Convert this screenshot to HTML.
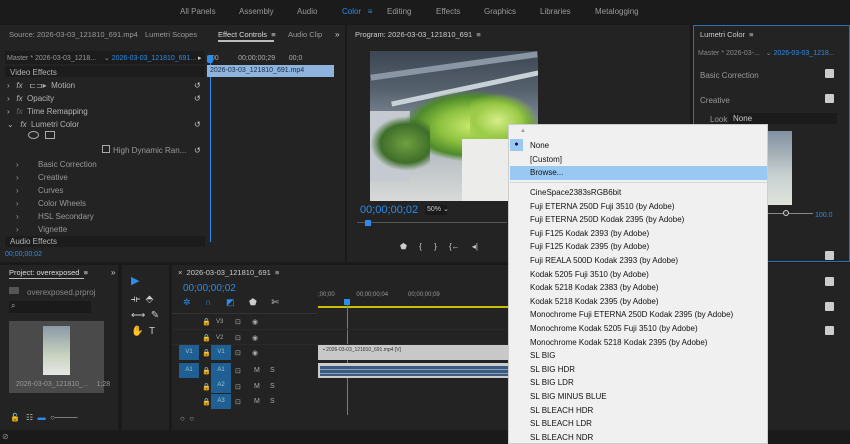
<!DOCTYPE html><html><head><style>
*{margin:0;padding:0;box-sizing:border-box}
body{width:850px;height:443px;background:#1a1a1a;font-family:"Liberation Sans",sans-serif;font-size:8px;color:#b4b4b4;position:relative;overflow:hidden}
.a{position:absolute;white-space:nowrap}
.p{position:absolute;background:#232323}
.b{color:#2d8ceb}
.menu{position:absolute;left:508px;top:124px;width:260px;height:320px;background:#f0f0f0;border:1px solid #ccc;color:#111;font-size:8px}
.mi{position:absolute;left:21px;white-space:nowrap}
.cb{position:absolute;width:9px;height:9px;background:#ccc;border-radius:1px}
.tb{position:absolute;width:20px;height:15px;background:#1f5f94;color:#9cc;font-size:6px;text-align:center;line-height:15px}
.t{position:absolute;color:#aaa;font-size:7px;white-space:nowrap}
</style></head><body>
<!-- top bar -->
<div class="a" style="left:0;top:0;width:850px;height:22px;background:#1b1b1b"></div>
<div class="a" style="left:180px;top:7px;color:#999">All Panels</div>
<div class="a" style="left:239px;top:7px;color:#999">Assembly</div>
<div class="a" style="left:297px;top:7px;color:#999">Audio</div>
<div class="a b" style="left:342px;top:7px">Color &nbsp;&nbsp;≡</div>
<div class="a" style="left:387px;top:7px;color:#999">Editing</div>
<div class="a" style="left:436px;top:7px;color:#999">Effects</div>
<div class="a" style="left:484px;top:7px;color:#999">Graphics</div>
<div class="a" style="left:540px;top:7px;color:#999">Libraries</div>
<div class="a" style="left:595px;top:7px;color:#999">Metalogging</div>
<!-- source / effect controls panel -->
<div class="p" style="left:0;top:25px;width:345px;height:237px"></div>
<div class="a" style="left:9px;top:30px;color:#999;font-size:7.5px">Source: 2026-03-03_121810_691.mp4</div>
<div class="a" style="left:145px;top:30px;color:#999;font-size:7.5px">Lumetri Scopes</div>
<div class="a" style="left:218px;top:30px;color:#ddd;font-size:7.5px">Effect Controls &nbsp;≡</div>
<div class="a" style="left:218px;top:40px;width:56px;height:2px;background:#bbb"></div>
<div class="a" style="left:288px;top:30px;color:#999;font-size:7.5px">Audio Clip</div>
<div class="a" style="left:335px;top:30px;color:#ccc">»</div>
<div class="a" style="left:5px;top:51px;width:200px;height:13px;background:#1c1c1c"></div>
<div class="a" style="left:7px;top:54px;color:#999;font-size:7px">Master * 2026-03-03_1218... &nbsp;&nbsp;&nbsp;⌄ <span class="b">2026-03-03_121810_691...</span></div>
<div class="a" style="left:198px;top:54px;color:#ccc;font-size:7px">▸</div>
<div class="a" style="left:207px;top:55px;color:#aaa;font-size:7px">&nbsp;;00 &nbsp;&nbsp;&nbsp;&nbsp;&nbsp;&nbsp;&nbsp;&nbsp;&nbsp;00;00;00;29 &nbsp;&nbsp;&nbsp;&nbsp;&nbsp;&nbsp;00;0</div>
<div class="a" style="left:207px;top:55px;width:6px;height:8px;background:#2d8ceb;border-radius:2px"></div>
<div class="a" style="left:210px;top:62px;width:1px;height:180px;background:#2d8ceb"></div>
<div class="a" style="left:207px;top:65px;width:127px;height:12px;background:#8eb4dd;color:#1a2a44;padding:2px 3px;font-size:7px">2026-03-03_121810_691.mp4</div>
<div class="a" style="left:5px;top:66px;width:200px;height:11px;background:#1c1c1c"></div>
<div class="a" style="left:10px;top:68px">Video Effects</div>
<div class="a" style="left:7px;top:81px">› &nbsp;&nbsp;<i>fx</i> &nbsp;&nbsp;⊏⊐▸ &nbsp;Motion</div>
<div class="a" style="left:7px;top:94px">› &nbsp;&nbsp;<i>fx</i> &nbsp;Opacity</div>
<div class="a" style="left:7px;top:107px">› &nbsp;&nbsp;<i style="color:#666">fx</i> &nbsp;Time Remapping</div>
<div class="a" style="left:7px;top:120px">⌄ &nbsp;&nbsp;<i>fx</i> &nbsp;Lumetri Color</div>
<div class="a" style="left:28px;top:131px;width:11px;height:8px;border:1px solid #aaa;border-radius:50%"></div>
<div class="a" style="left:45px;top:131px;width:10px;height:8px;border:1px solid #aaa"></div>
<div class="a" style="left:102px;top:145px;width:8px;height:8px;border:1px solid #aaa"></div>
<div class="a" style="left:113px;top:146px;color:#999">High Dynamic Ran...</div>
<div class="a" style="left:194px;top:79px;line-height:13px;color:#ccc">↺<br>↺<br><br>↺<br><br>↺</div>
<div class="a" style="left:16px;top:158px;line-height:13px;color:#999"><span>›</span><br>›<br>›<br>›<br>›<br>›</div>
<div class="a" style="left:38px;top:158px;line-height:13px;color:#999">Basic Correction<br>Creative<br>Curves<br>Color Wheels<br>HSL Secondary<br>Vignette</div>
<div class="a" style="left:5px;top:236px;width:200px;height:11px;background:#1c1c1c"></div>
<div class="a" style="left:10px;top:237px">Audio Effects</div>
<div class="a b" style="left:5px;top:251px;font-size:7px">00;00;00;02</div>
<!-- program panel -->
<div class="p" style="left:347px;top:25px;width:343px;height:237px"></div>
<div class="a" style="left:355px;top:30px;color:#ccc;font-size:7.5px">Program: 2026-03-03_121810_691 &nbsp;≡</div>
<div class="a" style="left:370px;top:51px;width:168px;height:150px;background:linear-gradient(180deg,#3d4754 0%,#55606d 25%,#7a8591 45%,#b8bfc4 70%,#d8dad8 100%);overflow:hidden">
 <div class="a" style="left:0;top:12px;width:168px;height:6px;background:#8a96a3;transform:rotate(-8deg)"></div>
 <div class="a" style="left:20px;top:35px;width:150px;height:5px;background:#c8d0d8;transform:rotate(-12deg)"></div>
 <div class="a" style="left:0;top:60px;width:40px;height:70px;background:#c4cad0"></div>
 <div class="a" style="left:35px;top:40px;width:133px;height:70px;background:radial-gradient(ellipse at 50% 50%,#c8ea6e 0%,#8cc03e 35%,#4e8a2a 60%,transparent 72%)"></div>
 <div class="a" style="left:0;top:65px;width:60px;height:55px;background:radial-gradient(ellipse at 60% 50%,#6fa040 0%,#3f6e2a 50%,transparent 70%)"></div>
 <div class="a" style="left:100px;top:42px;width:68px;height:55px;background:radial-gradient(ellipse at 40% 50%,#d4ee88 0%,#9ccb48 40%,transparent 70%)"></div>
 <div class="a" style="left:92px;top:88px;width:50px;height:62px;background:#ececea"></div>
</div>
<div class="a b" style="left:360px;top:204px;font-size:11px">00;00;00;02</div>
<div class="a" style="left:425px;top:205px;width:22px;height:10px;background:#1a1a1a;color:#ccc;font-size:7px;padding-left:2px">50% ⌄</div>
<div class="a" style="left:357px;top:222px;width:150px;height:1px;background:#555"></div>
<div class="a" style="left:365px;top:220px;width:6px;height:6px;background:#2d8ceb"></div>
<div class="a" style="left:400px;top:242px;color:#ccc;font-size:8px;word-spacing:10px">⬟ { } {← ◂|</div>
<!-- lumetri panel -->
<div class="p" style="left:693px;top:25px;width:157px;height:237px;border:1px solid #2d6fb8"></div>
<div class="a" style="left:700px;top:30px;color:#ccc;font-size:7.5px">Lumetri Color &nbsp;≡</div>
<div class="a" style="left:698px;top:49px;color:#888;font-size:7px">Master * 2026-03-... &nbsp;&nbsp;⌄ <span class="b">2026-03-03_1218...</span></div>
<div class="a" style="left:700px;top:71px;color:#999">Basic Correction</div>
<div class="a" style="left:700px;top:96px;color:#999">Creative</div>
<div class="cb" style="left:825px;top:69px"></div><div class="cb" style="left:825px;top:94px"></div>
<div class="a" style="left:710px;top:115px;color:#999">Look</div>
<div class="a" style="left:729px;top:113px;width:108px;height:11px;background:#1b1b1b;color:#ccc;padding:1px 4px">None</div>
<div class="a" style="left:767px;top:131px;width:25px;height:74px;background:linear-gradient(180deg,#8090a0,#c8d0d0 60%,#e0e4dc)"></div>
<div class="a" style="left:765px;top:213px;width:48px;height:1px;background:#888"></div>
<div class="a" style="left:783px;top:210px;width:6px;height:6px;border:1px solid #ccc;border-radius:50%;background:#333"></div>
<div class="a b" style="left:815px;top:212px;font-size:7px">100.0</div>
<div class="cb" style="left:825px;top:251px"></div>
<!-- right lower -->
<div class="p" style="left:767px;top:263px;width:83px;height:167px"></div>
<div class="cb" style="left:825px;top:277px"></div><div class="cb" style="left:825px;top:302px"></div><div class="cb" style="left:825px;top:326px"></div>
<!-- project -->
<div class="p" style="left:0;top:265px;width:118px;height:165px"></div>
<div class="a" style="left:9px;top:268px;color:#ddd;font-size:7.5px">Project: overexposed &nbsp;≡</div>
<div class="a" style="left:9px;top:278px;width:75px;height:1px;background:#bbb"></div>
<div class="a" style="left:111px;top:268px;color:#ccc">»</div>
<div class="a" style="left:9px;top:287px;width:10px;height:7px;background:#555"></div>
<div class="a" style="left:27px;top:288px;color:#888">overexposed.prproj</div>
<div class="a" style="left:9px;top:301px;width:82px;height:12px;background:#1a1a1a;color:#aaa;padding-left:2px">⌕</div>
<div class="a" style="left:9px;top:321px;width:95px;height:72px;background:#4a4a4a"></div>
<div class="a" style="left:43px;top:326px;width:27px;height:49px;background:linear-gradient(180deg,#8a99a6,#c9d3c0 60%,#e6e6e6)"></div>
<div class="a" style="left:16px;top:381px;color:#999;font-size:7px">2026-03-03_121810_... &nbsp;&nbsp;&nbsp;1;28</div>
<div class="a" style="left:10px;top:413px;color:#2aa84a">🔓</div>
<div class="a" style="left:26px;top:413px;color:#bbb">☷ &nbsp;<span class="b">▬</span> &nbsp;○────</div>
<!-- tools -->
<div class="p" style="left:122px;top:265px;width:47px;height:165px"></div>
<div class="a" style="left:131px;top:274px;color:#2d8ceb;font-size:11px">▶</div>
<div class="a" style="left:131px;top:292px;color:#ccc;line-height:16px;font-size:10px">⟛ &nbsp;⬘<br>⟷ &nbsp;✎<br>✋ &nbsp;T</div>
<!-- timeline -->
<div class="p" style="left:172px;top:265px;width:338px;height:165px"></div>
<div class="a" style="left:178px;top:268px;color:#ccc;font-size:7.5px">× &nbsp;2026-03-03_121810_691 &nbsp;≡</div>
<div class="a b" style="left:183px;top:283px;font-size:10px">00;00;00;02</div>
<div class="a b" style="left:183px;top:297px;font-size:9px;word-spacing:12px">✲ ∩ ◩ <span style="color:#ccc">⬟ ✄</span></div>
<div class="a" style="left:318px;top:292px;color:#999;font-size:6px">;00;00 &nbsp;&nbsp;&nbsp;&nbsp;&nbsp;&nbsp;&nbsp;&nbsp;&nbsp;&nbsp;&nbsp;&nbsp;00;00;00;04 &nbsp;&nbsp;&nbsp;&nbsp;&nbsp;&nbsp;&nbsp;&nbsp;&nbsp;&nbsp;&nbsp;00;00;00;09</div>
<div class="a" style="left:318px;top:306px;width:192px;height:2px;background:#c8c000"></div>
<div class="a" style="left:344px;top:299px;width:6px;height:6px;background:#2d8ceb"></div>
<div class="a" style="left:347px;top:305px;width:1px;height:110px;background:#2d8ceb"></div>
<div class="a" style="left:172px;top:313px;width:145px;height:1px;background:#333"></div>
<div class="a" style="left:172px;top:329px;width:338px;height:1px;background:#2a2a2a"></div>
<div class="a" style="left:172px;top:344px;width:338px;height:1px;background:#2a2a2a"></div>
<div class="tb" style="left:179px;top:345px">V1</div>
<div class="tb" style="left:211px;top:345px">V1</div>
<div class="tb" style="left:179px;top:363px">A1</div>
<div class="tb" style="left:211px;top:363px">A1</div>
<div class="tb" style="left:211px;top:378px">A2</div>
<div class="tb" style="left:211px;top:394px">A3</div>
<div class="t" style="left:202px;top:318px">🔒</div><div class="t" style="left:216px;top:319px;font-size:6px">V3</div><div class="t" style="left:235px;top:318px">⊡</div><div class="t" style="left:252px;top:318px">◉</div>
<div class="t" style="left:202px;top:334px">🔒</div><div class="t" style="left:216px;top:335px;font-size:6px">V2</div><div class="t" style="left:235px;top:334px">⊡</div><div class="t" style="left:252px;top:334px">◉</div>
<div class="t" style="left:202px;top:349px">🔒</div><div class="t" style="left:235px;top:349px">⊡</div><div class="t" style="left:252px;top:349px">◉</div>
<div class="t" style="left:202px;top:367px">🔒</div><div class="t" style="left:235px;top:367px">⊡</div><div class="t" style="left:254px;top:367px">M</div><div class="t" style="left:270px;top:367px">S</div>
<div class="t" style="left:202px;top:383px">🔒</div><div class="t" style="left:235px;top:383px">⊡</div><div class="t" style="left:254px;top:383px">M</div><div class="t" style="left:270px;top:383px">S</div>
<div class="t" style="left:202px;top:398px">🔒</div><div class="t" style="left:235px;top:398px">⊡</div><div class="t" style="left:254px;top:398px">M</div><div class="t" style="left:270px;top:398px">S</div>
<div class="a" style="left:318px;top:345px;width:192px;height:15px;background:#c8c8c8;color:#333;font-size:5px;padding:2px 5px">▪ 2026-03-03_121810_691.mp4 [V]</div>
<div class="a" style="left:318px;top:363px;width:192px;height:15px;background:#ccc"></div>
<div class="a" style="left:320px;top:366px;width:190px;height:10px;background:repeating-linear-gradient(180deg,#3b5a80 0 3px,#8aa0b8 3px 4px)"></div>
<div class="a" style="left:180px;top:414px;color:#aaa">○ &nbsp;○</div>
<!-- status bar -->
<div class="a" style="left:0;top:430px;width:850px;height:13px;background:#1a1a1a"></div>
<div class="a" style="left:2px;top:432px;color:#888">⊘</div>
<!-- menu -->
<div class="menu">
<div class="a" style="left:11px;top:3px;color:#999;font-size:6px">▲</div>
<div class="a" style="left:1px;top:14px;width:13px;height:12px;background:#99c9f2;text-align:center;font-size:7px;line-height:12px">●</div>
<div class="a" style="left:1px;top:41px;width:257px;height:14px;background:#99c9f2"></div>
<div class="a" style="left:1px;top:57px;width:257px;height:1px;background:#d8d8d8"></div>
<div class="mi" style="top:16px">None</div>
<div class="mi" style="top:30px">[Custom]</div>
<div class="mi" style="top:43px">Browse...</div>
<div class="mi" style="top:61px;line-height:13.6px">CineSpace2383sRGB6bit<br>Fuji ETERNA 250D Fuji 3510 (by Adobe)<br>Fuji ETERNA 250D Kodak 2395 (by Adobe)<br>Fuji F125 Kodak 2393 (by Adobe)<br>Fuji F125 Kodak 2395 (by Adobe)<br>Fuji REALA 500D Kodak 2393 (by Adobe)<br>Kodak 5205 Fuji 3510 (by Adobe)<br>Kodak 5218 Kodak 2383 (by Adobe)<br>Kodak 5218 Kodak 2395 (by Adobe)<br>Monochrome Fuji ETERNA 250D Kodak 2395 (by Adobe)<br>Monochrome Kodak 5205 Fuji 3510 (by Adobe)<br>Monochrome Kodak 5218 Kodak 2395 (by Adobe)<br>SL BIG<br>SL BIG HDR<br>SL BIG LDR<br>SL BIG MINUS BLUE<br>SL BLEACH HDR<br>SL BLEACH LDR<br>SL BLEACH NDR</div>
</div>
</body></html>
